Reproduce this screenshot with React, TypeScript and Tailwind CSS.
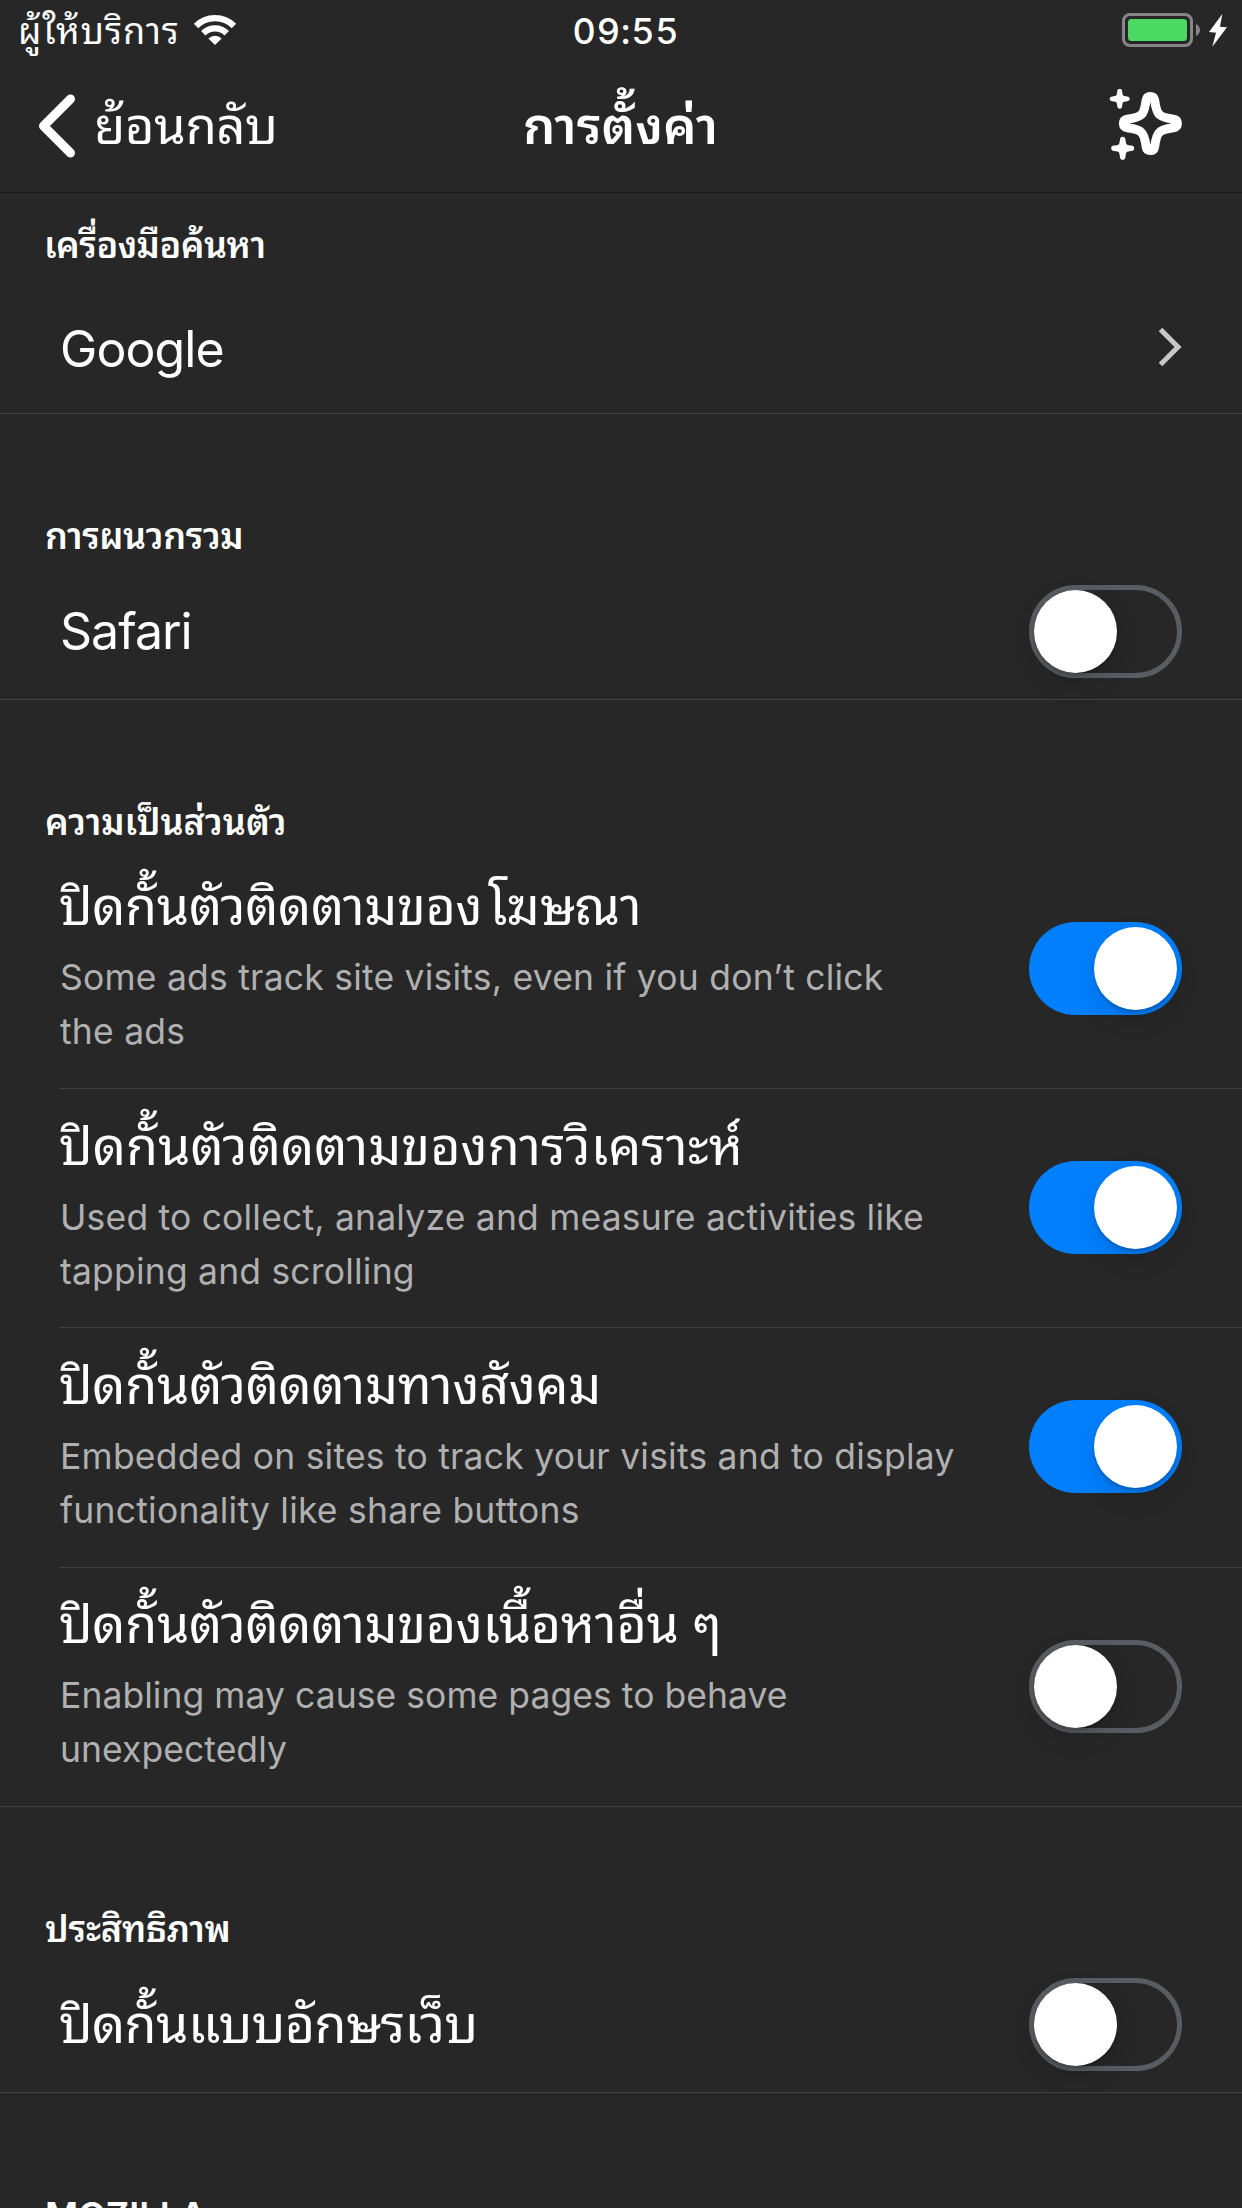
import React from "react";

const THAI = "font-['Inter','Noto_Sans_Thai_Looped','Loma',sans-serif]";

function WifiIcon() {
  return (
    <svg className="ml-[13px] h-[32px] w-[44px] shrink-0" viewBox="194 14 44 32" fill="none" stroke="#fff">
      <path d="M197.05 26.05A26.8 26.8 0 0 1 234.95 26.05" strokeWidth="6.3" />
      <path d="M204.26 33.26A16.6 16.6 0 0 1 227.74 33.26" strokeWidth="6.2" />
      <path d="M216 45L209.4 38.4A9.3 9.3 0 0 1 222.6 38.4Z" fill="#fff" stroke="none" />
    </svg>
  );
}

function BatteryIcon() {
  return (
    <svg className="h-[36px] w-[106px]" viewBox="1122 12 106 36">
      <rect x="1123.5" y="14.5" width="68" height="31" rx="6.5" fill="none" stroke="#868686" strokeWidth="3" />
      <rect x="1128" y="19" width="59" height="22" rx="3.5" fill="#4cd964" />
      <path d="M1196 24C1201.3 26 1201.3 34 1196 36Z" fill="#868686" />
      <path d="M1222.3 14L1209 32L1216 32.7L1212.3 46.7L1227 27.3L1220 26.7Z" fill="#fff" />
    </svg>
  );
}

function SparkleIcon() {
  const star =
    "M0 -10C1.7 -10 2.2 -9 2.4 -7.5C2.7 -5 3 -4 3.4 -3.4C4 -3 5 -2.7 7.5 -2.4C9 -2.2 10 -1.7 10 0C10 1.7 9 2.2 7.5 2.4C5 2.7 4 3 3.4 3.4C3 4 2.7 5 2.4 7.5C2.2 9 1.7 10 0 10C-1.7 10 -2.2 9 -2.4 7.5C-2.7 5 -3 4 -3.4 3.4C-4 3 -5 2.7 -7.5 2.4C-9 2.2 -10 1.7 -10 0C-10 -1.7 -9 -2.2 -7.5 -2.4C-5 -2.7 -4 -3 -3.4 -3.4C-3 -4 -2.7 -5 -2.4 -7.5C-2.2 -9 -1.7 -10 0 -10Z";
  return (
    <svg className="h-[74px] w-[74px]" viewBox="1109 89 74 74" fill="#fff">
      <path
        transform="translate(1150.4 123.5)"
        fill="none"
        stroke="#fff"
        strokeWidth="9"
        strokeLinejoin="round"
        d="M0 -27C3 -27 4 -25 4.3 -23C5.3 -16 6.5 -11 9 -9C11 -6.5 16 -5.3 23 -4.3C25 -4 27 -3 27 0C27 3 25 4 23 4.3C16 5.3 11 6.5 9 9C6.5 11 5.3 16 4.3 23C4 25 3 27 0 27C-3 27 -4 25 -4.3 23C-5.3 16 -6.5 11 -9 9C-11 6.5 -16 5.3 -23 4.3C-25 4 -27 3 -27 0C-27 -3 -25 -4 -23 -4.3C-16 -5.3 -11 -6.5 -9 -9C-6.5 -11 -5.3 -16 -4.3 -23C-4 -25 -3 -27 0 -27Z"
      />
      <path transform="translate(1119.7 98.8)" d={star} />
      <path transform="translate(1122.7 148.3) scale(1.15)" d={star} />
    </svg>
  );
}

function Switch({ on }: { on?: boolean }) {
  return (
    <div
      role="switch"
      aria-checked={!!on}
      className={
        on
          ? "flex h-[93px] w-[153px] shrink-0 items-center justify-end rounded-full bg-[#0080ff] p-[5px]"
          : "flex h-[93px] w-[153px] shrink-0 items-center rounded-full border-[5px] border-[#585d63]"
      }
    >
      <div className="h-[83px] w-[83px] rounded-full bg-white shadow-[0_9px_24px_rgba(0,0,0,0.15),0_3px_3px_rgba(0,0,0,0.16)]" />
    </div>
  );
}

function SectionTitle({ className, children }: { className: string; children: React.ReactNode }) {
  return (
    <h2 className={`flex shrink-0 items-end text-[36px] leading-[48px] font-semibold whitespace-nowrap ${className}`}>
      {children}
    </h2>
  );
}

const trackers = [
  {
    title: <>ปิดกั้นตัวติดตามของ<span className="ml-[6px]">โฆษณา</span></>,
    lines: ["Some ads track site visits, even if you don’t click", "the ads"],
    on: true,
    row: "h-[240px] ml-[60px]",
    text: "pt-[26px]",
    head: "tracking-[-0.35px]",
    body: "tracking-[0.22px]",
  },
  {
    title: <>ปิดกั้นตัวติดตามของการวิเคราะห์</>,
    lines: ["Used to collect, analyze and measure activities like", "tapping and scrolling"],
    on: true,
    row: "h-[239px] ml-[60px] pb-px",
    text: "pt-[26px]",
    head: "tracking-[0.05px]",
    body: "tracking-[0.19px]",
  },
  {
    title: <>ปิดกั้นตัวติดตามทางสังคม</>,
    lines: ["Embedded on sites to track your visits and to display", "functionality like share buttons"],
    on: true,
    row: "h-[240px] ml-[60px] pb-[2px]",
    text: "pt-[26px]",
    head: "tracking-[-0.28px]",
    body: "tracking-[0.22px]",
  },
  {
    title: <>ปิดกั้นตัวติดตามของเนื้อหาอื่น ๆ</>,
    lines: ["Enabling may cause some pages to behave", "unexpectedly"],
    on: false,
    row: "h-[239px] pl-[60px] pb-px",
    text: "pt-[25px]",
    head: "tracking-[-0.32px]",
    body: "tracking-[0.05px]",
  },
];

export default function App() {
  return (
    <div className={`flex h-[2208px] w-[1242px] flex-col overflow-hidden bg-[#272727] text-white ${THAI}`}>
      <div className="grid h-[60px] shrink-0 grid-cols-3 items-center pr-[14px] pl-[18px]">
        <div className="flex items-center whitespace-nowrap">
          <span className="pt-[2px] text-[36px] leading-[48px] tracking-[1px]">ผู้ให้บริการ</span>
          <WifiIcon />
        </div>
        <div className="pt-[2px] pl-[6px] text-center text-[36px] leading-[48px] font-medium tracking-[0.8px] tabular-nums">09:55</div>
        <div className="flex justify-end">
          <BatteryIcon />
        </div>
      </div>

      <header className="grid h-[133px] shrink-0 grid-cols-3 items-center border-b border-[#1b1b1b] pr-[59px] pl-[36px]">
        <div className="flex items-center gap-[18px]">
          <svg className="h-[66px] w-[40px]" viewBox="36 93.5 40 66" fill="none" stroke="#fff" strokeWidth="9" strokeLinecap="round" strokeLinejoin="round">
            <path d="M70.5 99.5L43.5 126.5L70.5 153.5" />
          </svg>
          <span className="text-[51px] leading-[64px] tracking-[-0.5px]">ย้อนกลับ</span>
        </div>
        <h1 className="pl-[22px] text-center text-[51px] leading-[64px] font-semibold">การตั้งค่า</h1>
        <div className="flex justify-end">
          <SparkleIcon />
        </div>
      </header>

      <SectionTitle className="h-[88px] pb-[12px] pl-[44px] tracking-[-0.5px]">เครื่องมือค้นหา</SectionTitle>
      <div className="flex h-[133px] shrink-0 items-center justify-between border-b border-[#424245] pr-[59px] pl-[60px]">
        <span className="pt-[4px] text-[50px] leading-[64px] tracking-[-0.9px]">Google</span>
        <svg className="h-[40px] w-[26px]" viewBox="1157 326.5 26 40" fill="none" stroke="#c7c7cc" strokeWidth="5">
          <path d="M1160.5 329L1178 346.5L1160.5 364" />
        </svg>
      </div>

      <SectionTitle className="h-[150px] pb-[4px] pl-[45px] tracking-[-0.4px]">การผนวกรวม</SectionTitle>
      <div className="flex h-[136px] shrink-0 items-center justify-between border-b border-[#424245] px-[60px]">
        <span className="pb-[2px] text-[50px] leading-[64px] tracking-[-1px]">Safari</span>
        <Switch />
      </div>

      <SectionTitle className="h-[149px] pb-[3px] pl-[45px]">ความเป็นส่วนตัว</SectionTitle>
      {trackers.map((t) => (
        <div key={t.lines[0]} className={`flex shrink-0 items-center justify-between border-b border-[#3f3f42] pr-[60px] ${t.row}`}>
          <div className={`self-start whitespace-nowrap ${t.text}`}>
            <div className={`-ml-px text-[52px] leading-[64px] ${t.head}`}>{t.title}</div>
            <div className={`mt-[12px] text-[35.5px] leading-[54px] text-[#b0b0b1] ${t.body}`}>
              {t.lines.map((l) => (
                <div key={l}>{l}</div>
              ))}
            </div>
          </div>
          <Switch on={t.on} />
        </div>
      ))}

      <SectionTitle className="h-[150px] pb-[4px] pl-[45px] tracking-[-0.2px]">ประสิทธิภาพ</SectionTitle>
      <div className="flex h-[136px] shrink-0 items-center justify-between border-b border-[#424245] px-[60px]">
        <span className="-ml-px text-[52px] leading-[64px] tracking-[-0.6px]">ปิดกั้นแบบอักษรเว็บ</span>
        <Switch />
      </div>

      <SectionTitle className="h-[150px] pb-[4px] pl-[45px]">MOZILLA</SectionTitle>
    </div>
  );
}
